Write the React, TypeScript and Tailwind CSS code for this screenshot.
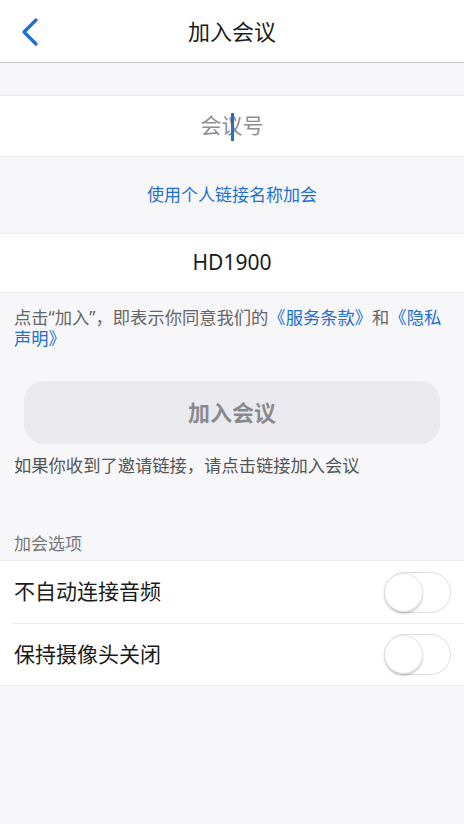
const font = { fontFamily: '"Noto Sans", "Noto Sans CJK SC", sans-serif' }

function Toggle() {
  return (
    <div className="relative w-[67px] h-[41px] rounded-full border border-[#dedede] bg-white">
      <div className="absolute left-[-1px] top-[0px] w-[39px] h-[39px] rounded-full bg-white shadow-[0_2px_2px_rgba(0,0,0,0.18)] border border-[#e2e2e2]" />
    </div>
  )
}

export default function App() {
  return (
    <div className="w-[464px] h-[824px] bg-[#f7f7f9] flex flex-col" style={font}>
      <div className="h-[63px] bg-white border-b border-[#c8c8cc] flex items-center relative shrink-0">
        <svg className="absolute left-[19px] top-[17px]" width="22" height="30" viewBox="0 0 22 30">
          <path d="M17 3 L5 15 L17 27" fill="none" stroke="#1f6fcf" strokeWidth="3.2" strokeLinecap="round" strokeLinejoin="round" />
        </svg>
        <div className="w-full text-center text-[22px] text-[#1a1a1a]">加入会议</div>
      </div>

      <div className="h-[32px] shrink-0" />

      <div className="h-[62px] shrink-0 bg-white border-y border-[#ececef] flex items-center justify-center relative">
        <span className="text-[21px] text-[#8e8e93]">会议号</span>
        <div className="absolute left-[231px] top-[17px] w-[3px] h-[28px] bg-[#1f6fcf]" />
      </div>

      <div className="h-[76px] shrink-0 flex items-center justify-center">
        <span className="text-[17px] text-[#1f6fcf]">使用个人链接名称加会</span>
      </div>

      <div className="h-[60px] shrink-0 bg-white border-y border-[#ececef] flex items-center justify-center">
        <span className="text-[21px] text-[#1a1a1a]">HD1900</span>
      </div>

      <div className="h-[88px] shrink-0 pl-[14px] pr-[16px] pt-[14px] text-[17.3px] leading-[21px] text-[#666]">
        点击“加入”，即表示你同意我们的<span className="text-[#1f6fcf]">《服务条款》</span>和<span className="text-[#1f6fcf]">《隐私声明》</span>
      </div>

      <div className="px-[24px] shrink-0">
        <div className="h-[63px] rounded-[20px] bg-[#e9e9ee] flex items-center justify-center text-[22px] font-bold text-[#8a8a8e]">
          加入会议
        </div>
      </div>

      <div className="h-[44px] shrink-0 px-[14px] flex items-center text-[17.3px] text-[#555]">
        如果你收到了邀请链接，请点击链接加入会议
      </div>

      <div className="h-[72px] shrink-0 px-[14px] pb-[4px] flex items-end text-[17px] text-[#777]">加会选项</div>

      <div className="bg-white border-y border-[#ececef]">
        <div className="h-[62px] flex items-center justify-between pl-[14px] pr-[13px]">
          <span className="text-[21px] text-[#1a1a1a]">不自动连接音频</span>
          <Toggle />
        </div>
        <div className="ml-[12px] border-t border-[#ececef]" />
        <div className="h-[61px] flex items-center justify-between pl-[14px] pr-[13px]">
          <span className="text-[21px] text-[#1a1a1a]">保持摄像头关闭</span>
          <Toggle />
        </div>
      </div>
    </div>
  )
}
